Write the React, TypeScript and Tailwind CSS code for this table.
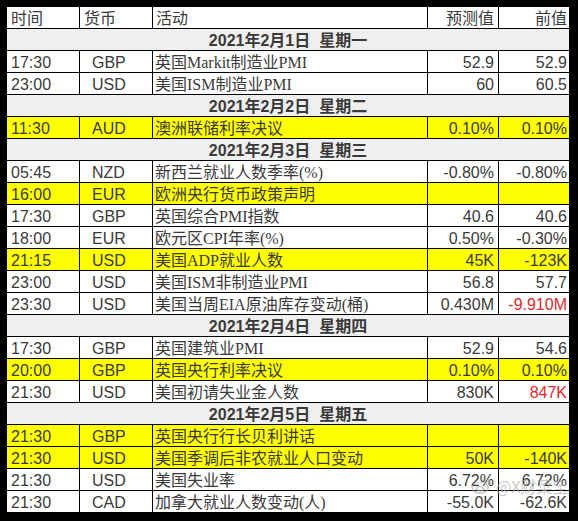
import React from 'react';

type Row =
  | { kind: 'date'; label: string }
  | { kind: 'item'; time: string; cur: string; act: string; fc: string; prev: string; hl?: boolean; red?: boolean };

const rows: Row[] = [
  { kind: 'date', label: '2021年2月1日  星期一' },
  { kind: 'item', time: '17:30', cur: 'GBP', act: '英国Markit制造业PMI', fc: '52.9', prev: '52.9' },
  { kind: 'item', time: '23:00', cur: 'USD', act: '美国ISM制造业PMI', fc: '60', prev: '60.5' },
  { kind: 'date', label: '2021年2月2日  星期二' },
  { kind: 'item', time: '11:30', cur: 'AUD', act: '澳洲联储利率决议', fc: '0.10%', prev: '0.10%', hl: true },
  { kind: 'date', label: '2021年2月3日  星期三' },
  { kind: 'item', time: '05:45', cur: 'NZD', act: '新西兰就业人数季率(%)', fc: '-0.80%', prev: '-0.80%' },
  { kind: 'item', time: '16:00', cur: 'EUR', act: '欧洲央行货币政策声明', fc: '', prev: '', hl: true },
  { kind: 'item', time: '17:30', cur: 'GBP', act: '英国综合PMI指数', fc: '40.6', prev: '40.6' },
  { kind: 'item', time: '18:00', cur: 'EUR', act: '欧元区CPI年率(%)', fc: '0.50%', prev: '-0.30%' },
  { kind: 'item', time: '21:15', cur: 'USD', act: '美国ADP就业人数', fc: '45K', prev: '-123K', hl: true },
  { kind: 'item', time: '23:00', cur: 'USD', act: '美国ISM非制造业PMI', fc: '56.8', prev: '57.7' },
  { kind: 'item', time: '23:30', cur: 'USD', act: '美国当周EIA原油库存变动(桶)', fc: '0.430M', prev: '-9.910M', red: true },
  { kind: 'date', label: '2021年2月4日  星期四' },
  { kind: 'item', time: '17:30', cur: 'GBP', act: '英国建筑业PMI', fc: '52.9', prev: '54.6' },
  { kind: 'item', time: '20:00', cur: 'GBP', act: '英国央行利率决议', fc: '0.10%', prev: '0.10%', hl: true },
  { kind: 'item', time: '21:30', cur: 'USD', act: '美国初请失业金人数', fc: '830K', prev: '847K', red: true },
  { kind: 'date', label: '2021年2月5日  星期五' },
  { kind: 'item', time: '21:30', cur: 'GBP', act: '英国央行行长贝利讲话', fc: '', prev: '', hl: true },
  { kind: 'item', time: '21:30', cur: 'USD', act: '美国季调后非农就业人口变动', fc: '50K', prev: '-140K', hl: true },
  { kind: 'item', time: '21:30', cur: 'USD', act: '美国失业率', fc: '6.72%', prev: '6.72%' },
  { kind: 'item', time: '21:30', cur: 'CAD', act: '加拿大就业人数变动(人)', fc: '-55.0K', prev: '-62.6K' },
];

const sans = "font-['Liberation_Sans','Noto_Sans_CJK_SC',sans-serif]";
const actFont = "font-['Liberation_Serif','Noto_Sans_CJK_SC',serif]";
const grid = 'grid grid-cols-[73px_73px_275px_71px_70px] h-[22px] border-b border-black';

const App = () => {
  return (
    <div className="w-[578px] h-[521px] bg-black pt-[7px] pl-[7px] relative">
      <div className={`w-[562px] bg-white text-[16px] leading-[21px] text-[#3a3a3a] ${sans}`}>
        {/* header */}
        <div className={grid}>
          <div className="border-r border-black pl-[4px] pt-px">时间</div>
          <div className="border-r border-black pl-[4px] pt-px">货币</div>
          <div className="border-r border-black pl-[3px] pt-px">活动</div>
          <div className="border-r border-black pr-[4px] pt-px text-right">预测值</div>
          <div className="pr-[2px] pt-px text-right">前值</div>
        </div>

        {rows.map((r, i) =>
          r.kind === 'date' ? (
            <div key={i} className="h-[22px] border-b border-black bg-[#efefef] pt-px text-center font-bold whitespace-pre">
              {r.label}
            </div>
          ) : (
            <div key={i} className={`${grid} ${r.hl ? 'bg-[#ffff00]' : 'bg-white'}`}>
              <div className="border-r border-black pl-[4px] pt-px">{r.time}</div>
              <div className="border-r border-black pl-[12px] pt-px">{r.cur}</div>
              <div className={`border-r border-black pl-[2px] pt-px whitespace-nowrap ${actFont}`}>{r.act}</div>
              <div className="border-r border-black pr-[4px] pt-px text-right">{r.fc}</div>
              <div className={`pr-[2px] pt-px text-right ${r.red ? 'text-[#e8262a]' : ''}`}>{r.prev}</div>
            </div>
          )
        )}
      </div>

      {/* watermark */}
      <div className="absolute left-[470px] top-[474px] flex items-center gap-[2px] text-[#a8a8a8] opacity-60 text-[16px] font-['Noto_Sans_CJK_SC',sans-serif]">
        <svg width="24" height="18" viewBox="0 0 26 20" fill="none" stroke="#a8a8a8" strokeWidth="1.6">
          <ellipse cx="11" cy="12" rx="9" ry="6" />
          <ellipse cx="11" cy="13" rx="3.5" ry="2.5" />
          <path d="M18 3c3 0 5 2 5 5" />
          <path d="M18 6c1.5 0 2.5 1 2.5 2.5" />
        </svg>
        <span>@X财菜宝</span>
      </div>
    </div>
  );
};

export default App;
